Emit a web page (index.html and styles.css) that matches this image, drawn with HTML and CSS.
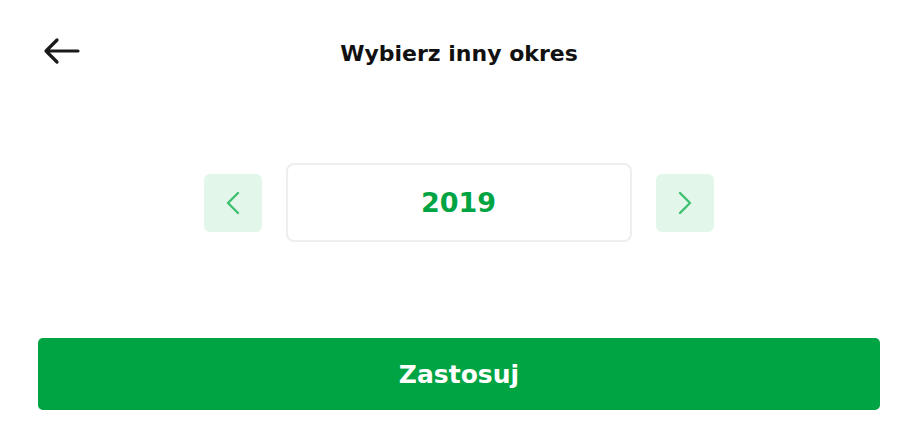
FILE: index.html
```html
<!DOCTYPE html>
<html lang="pl">
<head>
  <meta charset="UTF-8">
  <title>Wybierz inny okres</title>
  <link rel="stylesheet" href="styles.css">
</head>
<body>
  <div class="header">
    <button class="back" title="Wstecz">
      <svg width="38" height="28" viewBox="0 0 38 28">
        <path d="M36 14H4M15 3L4 14l11 11" fill="none" stroke="#1a1a1a" stroke-width="3.2" stroke-linecap="round" stroke-linejoin="round"/>
      </svg>
    </button>
    <h2>Wybierz inny okres</h2>
  </div>

  <div class="picker">
    <button class="nav" title="Poprzedni">
      <svg width="20" height="28" viewBox="0 0 20 28">
        <path d="M15 4L5 14l10 10" fill="none" stroke="#3fbf6f" stroke-width="2.4" stroke-linecap="round" stroke-linejoin="round"/>
      </svg>
    </button>
    <div class="year">2019</div>
    <button class="nav" title="Następny">
      <svg width="20" height="28" viewBox="0 0 20 28">
        <path d="M5 4l10 10L5 24" fill="none" stroke="#3fbf6f" stroke-width="2.4" stroke-linecap="round" stroke-linejoin="round"/>
      </svg>
    </button>
  </div>

  <div class="footer">
    <button class="apply">Zastosuj</button>
  </div>
</body>
</html>
```

FILE: styles.css
```css
body {
  font-family: 'DejaVu Sans', sans-serif;
  margin: 0;
  padding: 0;
  background: #fff;
  color: #111;
}
button {
  font-family: inherit;
  border: none;
  cursor: pointer;
  padding: 0;
}
.header {
  position: relative;
  height: 106px;
  display: flex;
  justify-content: center;
  align-items: flex-start;
}
.header h2 {
  margin: 41px 0 0 4px;
  font-size: 22px;
  font-weight: 600;
}
.back {
  position: absolute;
  left: 42px;
  top: 37px;
  background: none;
  display: flex;
}
.picker {
  display: flex;
  justify-content: center;
  align-items: center;
  gap: 24px;
  margin-top: 57px;
  padding-left: 3px;
}
.nav {
  width: 58px;
  height: 58px;
  border-radius: 6px;
  background: #e3f6ea;
  display: flex;
  align-items: center;
  justify-content: center;
}
.year {
  width: 342px;
  height: 75px;
  border: 2px solid #eeeeee;
  border-radius: 8px;
  display: flex;
  align-items: center;
  justify-content: center;
  font-size: 27px;
  font-weight: bold;
  color: #00a443;
}
.footer {
  padding: 96px 34px 0 38px;
}
.apply {
  width: 100%;
  height: 72px;
  border-radius: 5px;
  background: #00a443;
  color: #fff;
  font-size: 25px;
  font-weight: bold;
}
```
